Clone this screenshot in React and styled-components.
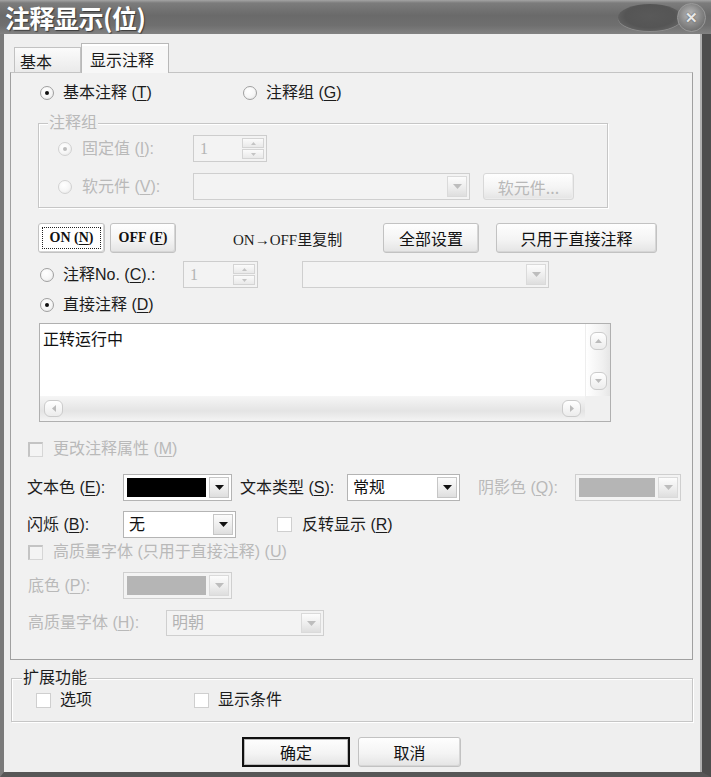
import React from 'react';
import styled, { createGlobalStyle, css } from 'styled-components';

const GlobalStyle = createGlobalStyle`
  html, body { margin: 0; padding: 0; background: #dcdcdc; }
  body { font-family: "Liberation Sans", "Noto Sans CJK SC", sans-serif; }
  * { box-sizing: border-box; }
`;

const FONT = `"Liberation Sans", "Noto Sans CJK SC", sans-serif`;

const Window = styled.div`
  width: 711px;
  height: 777px;
  display: flex;
  flex-direction: column;
  overflow: hidden;
`;

const TitleBar = styled.div`
  height: 34px;
  flex-shrink: 0;
  display: flex;
  align-items: center;
  justify-content: space-between;
  padding: 0 5px 0 5px;
  background: linear-gradient(to bottom, #a4a4a4 0, #7c7c7c 3px, #6a6a6a 45%, #6f6f6f 75%, #828282 100%);
`;

const Title = styled.div`
  font-family: "Noto Sans CJK SC", sans-serif;
  font-weight: 700;
  font-size: 25px;
  line-height: 1;
  color: #fff;
  letter-spacing: -0.5px;
  text-shadow: 1px 1px 1px #3a3a3a;
`;

const Controls = styled.div`
  display: flex;
  align-items: center;
`;

const Oval = styled.div`
  width: 64px;
  height: 27px;
  border-radius: 50%;
  background: radial-gradient(ellipse at 50% 45%, #595959 0, #555 55%, #646464 78%, #888 100%);
  box-shadow: 0 1px 0 #8c8c8c;
  margin-right: -5px;
`;

const CloseBtn = styled.div`
  width: 29px;
  height: 29px;
  border-radius: 50%;
  background: radial-gradient(circle at 45% 40%, #bdbdbd 0, #868686 50%, #5a5a5a 100%);
  border: 1px solid #9a9a9a;
  display: flex;
  align-items: center;
  justify-content: center;
  color: #e8e8e8;
  font-size: 15px;
  font-weight: 700;
  line-height: 1;
  text-shadow: 0 0 2px #444;
`;

const Frame = styled.div`
  flex: 1;
  display: flex;
  flex-direction: column;
  background: #efefef;
  border-left: 4px solid #7a7a7a;
  border-right: 9px solid #4e4e4e;
  border-bottom: 5px solid #575757;
  box-shadow: inset -2px 0 0 #b0b0b0;
  padding: 0 9px 0 6px;
`;

const TabStrip = styled.div`
  height: 38px;
  flex-shrink: 0;
  display: flex;
  align-items: flex-end;
  padding-left: 4px;
  position: relative;
  z-index: 1;
`;

const Tab = styled.div`
  font-family: "Noto Sans CJK SC", sans-serif;
  font-size: 16px;
  line-height: 1;
  color: #1a1a1a;
  display: flex;
  align-items: center;
  border: 1px solid #c2c2c2;
  border-bottom: none;
  ${p => p.$active ? css`
    width: 88px;
    height: 30px;
    margin-bottom: -1px;
    padding-left: 8px;
    background: #f7f7f7;
    border-color: #b8b8b8;
    box-shadow: inset 0 2px 0 #ffffff;
  ` : css`
    width: 67px;
    height: 25px;
    padding-left: 5px;
    padding-top: 2px;
    background: linear-gradient(#fbfbfb, #eaeaea);
  `}
`;

const Panel = styled.div`
  height: 588px;
  flex-shrink: 0;
  border: 1px solid #a0a0a0;
  border-top-color: #c4c4c4;
  background: #f1f1f1;
  display: flex;
  flex-direction: column;
`;

const Row = styled.div`
  display: flex;
  align-items: center;
  flex-shrink: 0;
  height: ${p => p.$h}px;
  margin-top: ${p => p.$mt || 0}px;
  padding-left: ${p => p.$pl || 0}px;
  justify-content: ${p => p.$center ? 'center' : 'flex-start'};
  gap: ${p => p.$gap || 0}px;
`;

const Slot = styled.div`
  display: flex;
  align-items: center;
  flex-shrink: 0;
  width: ${p => (p.$w ? `${p.$w}px` : 'auto')};
  margin-left: ${p => p.$ml || 0}px;
  gap: ${p => (p.$gap ?? 9)}px;
`;

const Label = styled.span`
  font-family: ${FONT};
  font-size: 16px;
  line-height: 1;
  white-space: nowrap;
  color: ${p => p.$disabled ? '#b9b9b9' : '#1c1c1c'};
  u { text-underline-offset: 2px; }
`;

const RadioDot = styled.span`
  width: 14px;
  height: 14px;
  flex-shrink: 0;
  border-radius: 50%;
  border: 1px solid ${p => p.$disabled ? '#d2d2d2' : '#a0a0a0'};
  background: radial-gradient(circle at 40% 35%, #ffffff 0, #f6f6f6 55%, #e0e0e0 100%);
  position: relative;
  &::after {
    content: '';
    display: ${p => p.$checked ? 'block' : 'none'};
    position: absolute;
    left: 4px;
    top: 4px;
    width: 4px;
    height: 4px;
    border-radius: 50%;
    background: ${p => p.$disabled ? '#bdbdbd' : '#111'};
  }
`;

const CheckBox = styled.span`
  width: 15px;
  height: 15px;
  flex-shrink: 0;
  background: #ffffff;
  border: 1px solid ${p => p.$disabled ? '#d6d6d6' : '#cfcfcf'};
  ${p => p.$disabled && css`
    border-top: 2px solid #c4c4c4;
    border-left: 2px solid #c4c4c4;
    background: #f4f4f4;
  `}
`;

const GroupBox = styled.div`
  position: relative;
  flex-shrink: 0;
  margin-top: ${p => p.$mt || 0}px;
  margin-left: ${p => p.$ml || 0}px;
  width: ${p => p.$w}px;
  height: ${p => p.$h}px;
  border: 1px solid #c6c6c6;
  box-shadow: 1px 1px 0 #ffffff, inset 1px 1px 0 #ffffff;
  display: flex;
  flex-direction: column;
`;

const Legend = styled.span`
  position: absolute;
  top: -10px;
  left: ${p => p.$left}px;
  padding: 0 1px;
  background: ${p => p.$bg};
  font-family: ${FONT};
  font-size: 16px;
  line-height: 18px;
  color: ${p => p.$disabled ? '#b9b9b9' : '#1c1c1c'};
`;

const SpinBox = styled.div`
  width: ${p => p.$w}px;
  height: 27px;
  flex-shrink: 0;
  margin-left: ${p => p.$ml || 0}px;
  border: 1px solid #cdcdcd;
  background: #f3f3f3;
  display: flex;
  align-items: center;
  justify-content: space-between;
  padding: 0 2px 0 6px;
`;

const SpinValue = styled.span`
  font-family: "Liberation Serif", serif;
  font-size: 16px;
  color: #b5b5b5;
`;

const SpinButtons = styled.div`
  display: flex;
  flex-direction: column;
  gap: 1px;
`;

const SpinButton = styled.span`
  width: 22px;
  height: 10px;
  border: 1px solid #d4d4d4;
  background: linear-gradient(#fbfbfb, #e9e9e9);
  display: flex;
  align-items: center;
  justify-content: center;
`;

const Combo = styled.div`
  width: ${p => p.$w}px;
  height: ${p => p.$h || 27}px;
  flex-shrink: 0;
  margin-left: ${p => p.$ml || 0}px;
  border: 1px solid ${p => p.$disabled ? '#cfcfcf' : '#b4b4b4'};
  background: ${p => p.$disabled ? '#f3f3f3' : '#ffffff'};
  display: flex;
  align-items: center;
  padding: 2px;
  gap: 3px;
`;

const ComboText = styled.span`
  flex: 1;
  padding-left: 3px;
  font-family: ${FONT};
  font-size: 16px;
  line-height: 1;
  color: ${p => p.$disabled ? '#b3b3b3' : '#111'};
`;

const Swatch = styled.span`
  flex: 1;
  align-self: stretch;
  background: ${p => p.$color};
  margin: 1px 0 1px 1px;
`;

const ArrowBtn = styled.span`
  width: 20px;
  align-self: stretch;
  flex-shrink: 0;
  border: 1px solid ${p => p.$disabled ? '#dadada' : '#c6c6c6'};
  background: linear-gradient(#fcfcfc, #ececec 60%, #dedede);
  display: flex;
  align-items: center;
  justify-content: center;
`;

const Btn = styled.div`
  width: ${p => p.$w}px;
  height: ${p => p.$h || 30}px;
  flex-shrink: 0;
  margin-left: ${p => p.$ml || 0}px;
  display: flex;
  align-items: center;
  justify-content: center;
  font-family: ${p => p.$latin ? `"Liberation Serif", "Noto Sans CJK SC", serif` : `"Noto Sans CJK SC", sans-serif`};
  font-weight: ${p => p.$latin ? 700 : 400};
  font-size: ${p => p.$latin ? 14 : 16}px;
  line-height: 1;
  color: ${p => p.$disabled ? '#b8b8b8' : '#111'};
  background: ${p => p.$focus ? '#ffffff' : 'linear-gradient(#fefefe, #f4f4f4 55%, #e4e4e4)'};
  border: 1px solid ${p => p.$disabled ? '#d8d8d8' : '#c2c2c2'};
  border-radius: 3px;
  box-shadow: inset -1px -1px 0 ${p => p.$disabled ? '#ececec' : '#d6d6d6'};
  ${p => p.$default && css`
    border: 2px solid #111;
    border-radius: 0;
    box-shadow: inset 0 0 0 1px #bbb;
  `}
  u { text-underline-offset: 2px; }
`;

const FocusRing = styled.span`
  display: flex;
  align-items: center;
  justify-content: center;
  width: calc(100% - 6px);
  height: calc(100% - 6px);
  border: 1px dotted #222;
`;

const CopyText = styled.span`
  width: 110px;
  margin-left: 57px;
  font-family: "Liberation Serif", "Noto Sans CJK SC", serif;
  font-size: 15px;
  white-space: nowrap;
  color: #1c1c1c;
`;

const TextArea = styled.div`
  margin-top: ${p => p.$mt}px;
  margin-left: ${p => p.$ml}px;
  width: 572px;
  height: 99px;
  flex-shrink: 0;
  border: 1px solid #b0b0b0;
  background: #fff;
  display: grid;
  grid-template-columns: 1fr 25px;
  grid-template-rows: 72px 1fr;
`;

const TextContent = styled.div`
  padding: 6px 3px;
  font-family: "Noto Sans CJK SC", sans-serif;
  font-size: 16px;
  line-height: 1;
  color: #111;
`;

const VScroll = styled.div`
  display: flex;
  flex-direction: column;
  align-items: center;
  justify-content: space-between;
  padding: 8px 0 6px;
  background: linear-gradient(to right, #ffffff, #f0f0f0 70%, #e6e6e6);
  border-left: 1px solid #eeeeee;
`;

const HScroll = styled.div`
  display: flex;
  align-items: center;
  justify-content: space-between;
  padding: 0 4px 0 4px;
  background: linear-gradient(#f6f6f6, #e4e4e4 60%, #f4f4f4);
`;

const Corner = styled.div`
  background: #f0f0f0;
`;

const ScrollArrow = styled.span`
  width: ${p => p.$horiz ? 19 : 17}px;
  height: ${p => p.$horiz ? 17 : 18}px;
  border: 1px solid #cbcbcb;
  border-radius: 6px;
  background: linear-gradient(#ffffff, #ececec);
  display: flex;
  align-items: center;
  justify-content: center;
`;

const Tri = ({ dir = 'down', color = '#111', w = 9, h = 5 }) => {
  const pts = {
    down: `0,0 ${w},0 ${w / 2},${h}`,
    up: `0,${h} ${w},${h} ${w / 2},0`,
  };
  if (dir === 'left' || dir === 'right') {
    const p = dir === 'left' ? `${h},0 ${h},${w} 0,${w / 2}` : `0,0 0,${w} ${h},${w / 2}`;
    return (
      <svg width={h} height={w} viewBox={`0 0 ${h} ${w}`}>
        <polygon points={p} fill={color} />
      </svg>
    );
  }
  return (
    <svg width={w} height={h} viewBox={`0 0 ${w} ${h}`}>
      <polygon points={pts[dir]} fill={color} />
    </svg>
  );
};

const Radio = ({ checked, disabled, children, w, ml, gap }) => (
  <Slot $w={w} $ml={ml} $gap={gap}>
    <RadioDot $checked={checked} $disabled={disabled} />
    <Label $disabled={disabled}>{children}</Label>
  </Slot>
);

const Check = ({ disabled, children, w, ml, gap }) => (
  <Slot $w={w} $ml={ml} $gap={gap ?? 10}>
    <CheckBox $disabled={disabled} />
    <Label $disabled={disabled}>{children}</Label>
  </Slot>
);

const Spin = ({ w, ml }) => (
  <SpinBox $w={w} $ml={ml}>
    <SpinValue>1</SpinValue>
    <SpinButtons>
      <SpinButton><Tri dir="up" color="#c4c4c4" w={5} h={3} /></SpinButton>
      <SpinButton><Tri dir="down" color="#c4c4c4" w={5} h={3} /></SpinButton>
    </SpinButtons>
  </SpinBox>
);

const Dropdown = ({ w, ml, h, text, disabled }) => (
  <Combo $w={w} $ml={ml} $h={h} $disabled={disabled}>
    <ComboText $disabled={disabled}>{text}</ComboText>
    <ArrowBtn $disabled={disabled}>
      <Tri color={disabled ? '#bdbdbd' : '#111'} />
    </ArrowBtn>
  </Combo>
);

const ColorDropdown = ({ w, ml, color, disabled }) => (
  <Combo $w={w} $ml={ml} $disabled={disabled}>
    <Swatch $color={color} />
    <ArrowBtn $disabled={disabled}>
      <Tri color={disabled ? '#bdbdbd' : '#111'} />
    </ArrowBtn>
  </Combo>
);

export default function App() {
  return (
    <>
      <GlobalStyle />
      <Window>
        <TitleBar>
          <Title>注释显示(位)</Title>
          <Controls>
            <Oval />
            <CloseBtn>✕</CloseBtn>
          </Controls>
        </TitleBar>
        <Frame>
          <TabStrip>
            <Tab>基本</Tab>
            <Tab $active>显示注释</Tab>
          </TabStrip>
          <Panel>
            <Row $h={20} $mt={10} $pl={29}>
              <Radio checked w={203}>基本注释 (<u>T</u>)</Radio>
              <Radio>注释组 (<u>G</u>)</Radio>
            </Row>

            <GroupBox $mt={20} $ml={27} $w={570} $h={85}>
              <Legend $left={9} $bg="#f1f1f1" $disabled>注释组</Legend>
              <Row $h={27} $mt={11} $pl={19}>
                <Radio checked disabled w={135} gap={10}>固定值 (<u>I</u>):</Radio>
                <Spin w={74} />
              </Row>
              <Row $h={27} $mt={11} $pl={19}>
                <Radio disabled w={135} gap={10}>软元件 (<u>V</u>):</Radio>
                <Dropdown w={277} disabled text="" />
                <Btn $w={91} $h={27} $ml={13} $disabled>软元件...</Btn>
              </Row>
            </GroupBox>

            <Row $h={30} $mt={15} $pl={27}>
              <Btn $w={67} $latin $focus><FocusRing>ON (<u>N</u>)</FocusRing></Btn>
              <Btn $w={66} $ml={5} $latin>OFF (<u>F</u>)</Btn>
              <CopyText>ON→OFF里复制</CopyText>
              <Btn $w={96} $ml={40}>全部设置</Btn>
              <Btn $w={161} $ml={17}>只用于直接注释</Btn>
            </Row>

            <Row $h={27} $mt={8} $pl={29}>
              <Radio w={143}>注释No. (<u>C</u>).:</Radio>
              <Spin w={75} />
              <Dropdown w={247} ml={44} disabled text="" />
            </Row>

            <Row $h={20} $mt={7} $pl={29}>
              <Radio checked>直接注释 (<u>D</u>)</Radio>
            </Row>

            <TextArea $mt={8} $ml={28}>
              <TextContent>正转运行中</TextContent>
              <VScroll>
                <ScrollArrow><Tri dir="up" color="#bbb" w={7} h={4} /></ScrollArrow>
                <ScrollArrow><Tri dir="down" color="#bbb" w={7} h={4} /></ScrollArrow>
              </VScroll>
              <HScroll>
                <ScrollArrow $horiz><Tri dir="left" color="#bbb" w={7} h={4} /></ScrollArrow>
                <ScrollArrow $horiz><Tri dir="right" color="#bbb" w={7} h={4} /></ScrollArrow>
              </HScroll>
              <Corner />
            </TextArea>

            <Row $h={20} $mt={17} $pl={17}>
              <Check disabled>更改注释属性 (<u>M</u>)</Check>
            </Row>

            <Row $h={27} $mt={15} $pl={16}>
              <Slot $w={96}><Label>文本色 (<u>E</u>):</Label></Slot>
              <ColorDropdown w={109} color="#000" />
              <Slot $w={107} $ml={8}><Label>文本类型 (<u>S</u>):</Label></Slot>
              <Dropdown w={113} text="常规" />
              <Slot $w={97} $ml={18}><Label $disabled>阴影色 (<u>Q</u>):</Label></Slot>
              <ColorDropdown w={106} color="#b5b5b5" disabled />
            </Row>

            <Row $h={27} $mt={10} $pl={16}>
              <Slot $w={96}><Label>闪烁 (<u>B</u>):</Label></Slot>
              <Dropdown w={113} text="无" />
              <Check ml={41}>反转显示 (<u>R</u>)</Check>
            </Row>

            <Row $h={20} $mt={4} $pl={17}>
              <Check disabled>高质量字体 (只用于直接注释) (<u>U</u>)</Check>
            </Row>

            <Row $h={27} $mt={10} $pl={17}>
              <Slot $w={95}><Label $disabled>底色 (<u>P</u>):</Label></Slot>
              <ColorDropdown w={109} color="#b5b5b5" disabled />
            </Row>

            <Row $h={26} $mt={11} $pl={17}>
              <Slot $w={138}><Label $disabled>高质量字体 (<u>H</u>):</Label></Slot>
              <Dropdown w={158} h={26} text="明朝" disabled />
            </Row>
          </Panel>

          <GroupBox $mt={18} $ml={1} $w={682} $h={44}>
            <Legend $left={10} $bg="#efefef">扩展功能</Legend>
            <Row $h={42} $pl={24}>
              <Check w={158} gap={9}>选项</Check>
              <Check gap={9}>显示条件</Check>
            </Row>
          </GroupBox>

          <Row $h={29} $mt={15} $center $gap={8}>
            <Btn $w={108} $h={30} $default>确定</Btn>
            <Btn $w={103} $h={30}>取消</Btn>
          </Row>
        </Frame>
      </Window>
    </>
  );
}
